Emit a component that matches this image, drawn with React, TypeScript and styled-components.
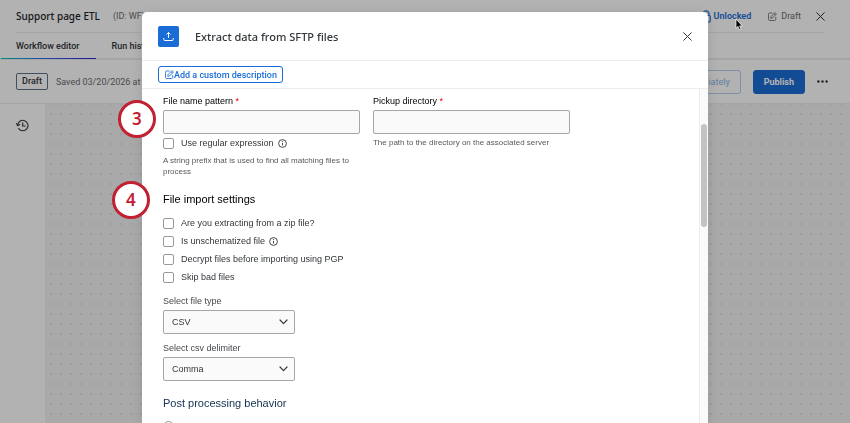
import React from "react";
import styled, { createGlobalStyle, css } from "styled-components";

const GlobalStyle = createGlobalStyle`
  *, *::before, *::after { box-sizing: border-box; }
  body { margin: 0; overflow: hidden; background: #fff; }
  button, input, select { font: inherit; color: inherit; margin: 0; }
`;

const titleFont = css`font-family: "Noto Sans", "Open Sans", sans-serif;`;
const uiFont = css`font-family: Roboto, "Noto Sans", sans-serif;`;
const formFont = css`font-family: "Liberation Sans", Arial, sans-serif;`;

const Page = styled.div`
  ${uiFont}
  position: relative;
  display: flex;
  flex-direction: column;
  height: 100vh;
  overflow: hidden;
  color: #32363a;
  font-size: 9px;
`;

const TitleBar = styled.header`
  display: flex;
  align-items: center;
  height: 33px;
  margin: 0 25px 0 16px;
  border-bottom: 1px solid #ededed;
  white-space: nowrap;
`;

const PageTitle = styled.h1`
  ${titleFont}
  margin: 0 13px 0 0;
  font-size: 10px;
  font-weight: 500;
  color: #1d2229;
`;

const PageId = styled.span`
  color: #6a6d70;
`;

const TitleActions = styled.div`
  display: flex;
  align-items: center;
  margin-left: auto;
`;

const LockButton = styled.button`
  display: flex;
  align-items: center;
  gap: 3px;
  padding: 0;
  border: 0;
  background: none;
  color: #1a6dd6;
  font-weight: 600;
`;

const Status = styled.span`
  display: flex;
  align-items: center;
  gap: 4px;
  margin-left: 17px;
  color: #6a6d70;
`;

const IconButton = styled.button<{ $gap?: number }>`
  display: grid;
  place-items: center;
  margin-left: ${(p) => p.$gap ?? 0}px;
  padding: 0;
  border: 0;
  background: none;
  color: #32363a;
`;

const Tabs = styled.nav`
  display: flex;
  height: 27px;
  border-bottom: 2px solid #ececec;
  white-space: nowrap;
`;

const Tab = styled.a<{ $active?: boolean }>`
  position: relative;
  display: flex;
  align-items: center;
  padding: 0 16px;
  font-weight: 500;
  color: #32363a;
  text-decoration: none;

  ${(p) =>
    p.$active &&
    css`
      &::after {
        content: "";
        position: absolute;
        left: 1px;
        right: 0;
        bottom: -1px;
        height: 1px;
        background: linear-gradient(90deg, #00c8b4, #3c5ff0 50%, #2a1fd0);
      }
    `}
`;

const Toolbar = styled.div`
  display: flex;
  align-items: center;
  height: 44px;
  padding: 0 22px 0 16px;
  border-bottom: 1px solid #ececec;
  white-space: nowrap;
`;

const DraftTag = styled.span`
  padding: 0 5px;
  border: 1px solid #5b738b;
  border-radius: 2px;
  line-height: 15px;
  font-weight: 500;
`;

const Saved = styled.span`
  margin-left: 8px;
  color: #6a6d70;
`;

const ToolbarButton = styled.button<{ $primary?: boolean }>`
  height: 24px;
  padding: 0 10px;
  border: 1px solid ${(p) => (p.$primary ? "#1a6dd6" : "#b8cdec")};
  border-radius: 3px;
  background: ${(p) => (p.$primary ? "#1a6dd6" : "transparent")};
  color: ${(p) => (p.$primary ? "#fff" : "#8db5e6")};
  font-weight: ${(p) => (p.$primary ? 700 : 400)};
`;

const ToolbarActions = styled.div`
  display: flex;
  gap: 12px;
  margin-left: auto;
`;

const Workspace = styled.div`
  display: flex;
  flex: 1;
  min-height: 0;
`;

const Rail = styled.aside`
  width: 45px;
  padding: 15px 16px;
`;

const Canvas = styled.div`
  flex: 1;
  background-color: #f2f2f2;
  background-image: radial-gradient(circle, #e2e2e2 1px, transparent 1px);
  background-size: 10px 10px;
  background-position: 1px -5px;
`;

const Overlay = styled.div`
  ${formFont}
  position: fixed;
  inset: 0;
  display: flex;
  justify-content: center;
  padding-top: 12px;
  background: rgba(0, 0, 0, 0.3);
`;

const Dialog = styled.section`
  position: relative;
  display: flex;
  flex-direction: column;
  width: 66.6%;
  border-radius: 5px 5px 0 0;
  background: #fff;
  box-shadow: 0 2px 14px rgba(0, 0, 0, 0.12);
`;

const DialogHeader = styled.header`
  ${titleFont}
  display: flex;
  align-items: center;
  height: 49px;
  padding: 0 16px;
  border-bottom: 1px solid #ededed;
  color: #32363a;
`;

const ActionIcon = styled.span`
  display: grid;
  place-items: center;
  width: 21px;
  height: 21px;
  margin-right: 16px;
  border-radius: 2px;
  background: #1a6dd6;
  color: #fff;
`;

const DialogTitle = styled.h2`
  flex: 1;
  margin: 0;
  font-size: 11px;
  font-weight: 500;
`;

const DescriptionBar = styled.div`
  display: flex;
  align-items: center;
  height: 28px;
  padding: 0 16px;
  border-bottom: 1px solid #ededed;
`;

const DescriptionButton = styled.button`
  ${uiFont}
  display: flex;
  align-items: center;
  height: 17px;
  padding: 0 5px 0 6px;
  border: 1px solid #1a6dd6;
  border-radius: 3px;
  background: #fff;
  color: #1a6dd6;
  font-size: 9px;
  font-weight: 500;
  white-space: nowrap;
`;

const DialogBody = styled.div`
  display: flex;
  flex: 1;
  min-height: 0;
  overflow: hidden;
`;

const Form = styled.form`
  flex: 1;
  padding: 6px 21px 0;
  color: #32363a;
  font-size: 9px;
`;

const FieldGrid = styled.div`
  display: grid;
  grid-template-columns: repeat(2, minmax(0, 197px));
  column-gap: 13px;
`;

const Field = styled.div<{ $top?: number }>`
  display: flex;
  flex-direction: column;
  align-items: flex-start;
  margin-top: ${(p) => p.$top ?? 0}px;
`;

const Label = styled.label<{ $strong?: boolean }>`
  line-height: 12px;
  margin-bottom: 3px;
  color: ${(p) => (p.$strong ? "#000" : "#45494d")};
`;

const Required = styled.span`
  color: #e00;
`;

const TextInput = styled.input`
  width: 100%;
  height: 24px;
  padding: 0 8px;
  border: 1px solid #a6a6a6;
  border-radius: 2px;
  background: #fafafa;
`;

const Hint = styled.p`
  margin: 3px 0 0;
  font-size: 8px;
  line-height: 11px;
  color: #55585c;
`;

const CheckRow = styled.div`
  display: flex;
  align-items: center;
  gap: 4px;
  height: 18px;
`;

const CheckLabel = styled.label`
  display: flex;
  align-items: center;
  gap: 7px;
  white-space: nowrap;
`;

const CheckBox = styled.input.attrs({ type: "checkbox" })`
  appearance: none;
  width: 11px;
  height: 11px;
  border: 1px solid #999;
  border-radius: 2px;
  background: #fff;
`;

const RadioButton = styled.input.attrs({ type: "radio" })`
  appearance: none;
  display: block;
  width: 11px;
  height: 11px;
  border: 1px solid #999;
  border-radius: 50%;
  background: #fff;
`;

const Heading = styled.h3<{ $navy?: boolean }>`
  margin: 0;
  line-height: 14px;
  font-size: 11px;
  font-weight: 400;
  color: ${(p) => (p.$navy ? "#12304f" : "#000")};
`;

const Section = styled.section<{ $top: number }>`
  margin-top: ${(p) => p.$top}px;
`;

const OptionList = styled.div<{ $top: number }>`
  margin-top: ${(p) => p.$top}px;
`;

const SelectBox = styled.div`
  display: grid;
  align-items: center;
  width: 132px;

  > * { grid-area: 1 / 1; }
  > svg { justify-self: end; margin-right: 7px; pointer-events: none; }
`;

const Select = styled.select`
  appearance: none;
  width: 100%;
  height: 24px;
  padding: 0 8px;
  border: 1px solid #a6a6a6;
  border-radius: 2px;
  background: #fafafa;
  color: #32363a;
`;

const ScrollTrack = styled.div`
  width: 9px;
  padding: 35px 1px 0;
  border-left: 1px solid #ececec;
  background: #fafafa;
`;

const ScrollThumb = styled.div`
  width: 6px;
  height: 103px;
  border-radius: 3px;
  background: #c3c3c3;
`;

const StepBadge = styled.span<{ $left: number; $top: number }>`
  ${titleFont}
  position: absolute;
  left: ${(p) => p.$left}px;
  top: ${(p) => p.$top}px;
  display: grid;
  place-items: center;
  width: 38px;
  height: 38px;
  border: 3px solid #c22033;
  border-radius: 50%;
  background: #fff;
  color: #c22033;
  font-size: 17px;
  line-height: 20px;
  font-weight: 600;
`;

const Pointer = styled.svg`
  position: fixed;
  right: 107px;
  top: 18px;
`;

const EditIcon = () => (
  <svg width="9" height="9" viewBox="0 0 18 18" fill="none" stroke="currentColor" strokeWidth="1.7" strokeLinejoin="round" aria-hidden="true">
    <path d="M9 2H3.5A2.5 2.5 0 0 0 1 4.500V14.500A2.500 2.500 0 0 0 3.500 17H13A2.500 2.500 0 0 0 15.500 14.500V10" />
    <path d="M14 1.200L16.800 4L9 12L5.500 12.800L6.200 9Z" />
    <path d="M12 3.500L14.500 6" />
  </svg>
);

const CloseIcon = () => (
  <svg width="9" height="9" viewBox="0 0 9 9" fill="none" stroke="currentColor" strokeLinecap="round" aria-hidden="true">
    <path d="M0.700 0.700L8.300 8.300M8.300 0.700L0.700 8.300" />
  </svg>
);

const InfoIcon = () => (
  <svg width="9" height="9" viewBox="0 0 18 18" fill="none" stroke="#32363a" strokeWidth="1.800" role="img" aria-label="More information">
    <circle cx="9" cy="9" r="7.800" />
    <path d="M9 8V13" />
    <circle cx="9" cy="5.200" r="0.500" fill="#32363a" />
  </svg>
);

const ChevronIcon = () => (
  <svg width="9" height="6" viewBox="0 0 9 6" fill="none" stroke="#32363a" strokeWidth="1.200" strokeLinecap="round" strokeLinejoin="round" aria-hidden="true">
    <path d="M1 1L4.500 4.600L8 1" />
  </svg>
);

const UploadIcon = () => (
  <svg width="11" height="11" viewBox="0 0 11 11" fill="none" stroke="currentColor" strokeLinecap="round" strokeLinejoin="round" aria-hidden="true">
    <path d="M5.500 6.500V1.800M3.800 3.200L5.500 1.500L7.200 3.200" />
    <path d="M0.800 7.500V8.500Q0.800 9.500 1.800 9.500H9.200Q10.200 9.500 10.200 8.500V7.500" />
  </svg>
);

const LockIcon = () => (
  <svg width="9" height="13" viewBox="0 0 9 13" fill="none" stroke="currentColor" strokeWidth="1.200" aria-hidden="true">
    <path d="M1 4.500V3.800A3 3 0 0 1 7 3.800V5.500" />
    <rect x="0.800" y="5.500" width="7.400" height="6.500" rx="1" />
  </svg>
);

const HistoryIcon = () => (
  <svg width="13" height="13" viewBox="0 0 13 13" fill="none" stroke="currentColor" strokeWidth="1.100" strokeLinecap="round" strokeLinejoin="round" aria-hidden="true">
    <path d="M1.600 6.200A5.200 5.200 0 1 1 2.600 9.600" />
    <path d="M0.600 4.500L1.600 6.700L3.800 5.600" />
    <path d="M6.700 3.800V7H9.200" />
  </svg>
);

const MoreIcon = () => (
  <svg width="11" height="3" viewBox="0 0 11 3" fill="currentColor" aria-hidden="true">
    <circle cx="1.400" cy="1.500" r="1.200" />
    <circle cx="5.500" cy="1.500" r="1.200" />
    <circle cx="9.600" cy="1.500" r="1.200" />
  </svg>
);

const importOptions = [
  { label: "Are you extracting from a zip file?" },
  { label: "Is unschematized file", info: true },
  { label: "Decrypt files before importing using PGP" },
  { label: "Skip bad files" },
];

const Check = ({ label, info }: { label: string; info?: boolean }) => (
  <CheckRow>
    <CheckLabel>
      <CheckBox />
      {label}
    </CheckLabel>
    {info && <InfoIcon />}
  </CheckRow>
);

const SelectField = ({ id, label, options, top }: { id: string; label: string; options: string[]; top: number }) => (
  <Field $top={top}>
    <Label htmlFor={id}>{label}</Label>
    <SelectBox>
      <Select id={id}>
        {options.map((o) => (
          <option key={o}>{o}</option>
        ))}
      </Select>
      <ChevronIcon />
    </SelectBox>
  </Field>
);

export default function App() {
  return (
    <>
      <GlobalStyle />
      <Page>
        <TitleBar>
          <PageTitle>Support page ETL</PageTitle>
          <PageId>(ID: WF)</PageId>
          <TitleActions>
            <LockButton>
              <LockIcon />
              Unlocked
            </LockButton>
            <Status>
              <EditIcon />
              Draft
            </Status>
            <IconButton $gap={15} aria-label="Close workflow">
              <CloseIcon />
            </IconButton>
          </TitleActions>
        </TitleBar>
        <Tabs>
          <Tab href="#editor" $active>Workflow editor</Tab>
          <Tab href="#history">Run history</Tab>
        </Tabs>
        <Toolbar>
          <DraftTag>Draft</DraftTag>
          <Saved>Saved 03/20/2026 at</Saved>
          <ToolbarActions>
            <ToolbarButton disabled>Run immediately</ToolbarButton>
            <ToolbarButton $primary>Publish</ToolbarButton>
            <IconButton aria-label="More actions">
              <MoreIcon />
            </IconButton>
          </ToolbarActions>
        </Toolbar>
        <Workspace>
          <Rail>
            <IconButton aria-label="Version history">
              <HistoryIcon />
            </IconButton>
          </Rail>
          <Canvas />
        </Workspace>
      </Page>

      <Overlay>
        <Dialog role="dialog" aria-labelledby="dialog-title">
          <DialogHeader>
            <ActionIcon>
              <UploadIcon />
            </ActionIcon>
            <DialogTitle id="dialog-title">Extract data from SFTP files</DialogTitle>
            <IconButton aria-label="Close">
              <CloseIcon />
            </IconButton>
          </DialogHeader>
          <DescriptionBar>
            <DescriptionButton>
              <EditIcon />
              Add a custom description
            </DescriptionButton>
          </DescriptionBar>
          <DialogBody>
            <Form>
              <FieldGrid>
                <Field>
                  <Label $strong htmlFor="pattern">
                    File name pattern <Required>*</Required>
                  </Label>
                  <TextInput id="pattern" />
                  <Check label="Use regular expression" info />
                  <Hint>A string prefix that is used to find all matching files to process</Hint>
                </Field>
                <Field>
                  <Label $strong htmlFor="directory">
                    Pickup directory <Required>*</Required>
                  </Label>
                  <TextInput id="directory" />
                  <Hint>The path to the directory on the associated server</Hint>
                </Field>
              </FieldGrid>
              <Section $top={15}>
                <Heading>File import settings</Heading>
                <OptionList $top={8}>
                  {importOptions.map((o) => (
                    <Check key={o.label} {...o} />
                  ))}
                </OptionList>
                <SelectField id="file-type" label="Select file type" options={["CSV"]} top={9} />
                <SelectField id="delimiter" label="Select csv delimiter" options={["Comma"]} top={8} />
              </Section>
              <Section $top={15}>
                <Heading $navy>Post processing behavior</Heading>
                <OptionList $top={11}>
                  <RadioButton name="post" aria-label="Post processing option" />
                </OptionList>
              </Section>
            </Form>
            <ScrollTrack>
              <ScrollThumb />
            </ScrollTrack>
          </DialogBody>
          <StepBadge $left={-24} $top={88}>3</StepBadge>
          <StepBadge $left={-30} $top={169}>4</StepBadge>
        </Dialog>
      </Overlay>

      <Pointer width="8" height="13" viewBox="0 0 8 13" aria-hidden="true">
        <path d="M1 1V10.200L3 8.400L4.300 11.800L6 11.100L4.600 7.900H7.300Z" fill="#000" stroke="#fff" strokeWidth="0.700" />
      </Pointer>
    </>
  );
}
